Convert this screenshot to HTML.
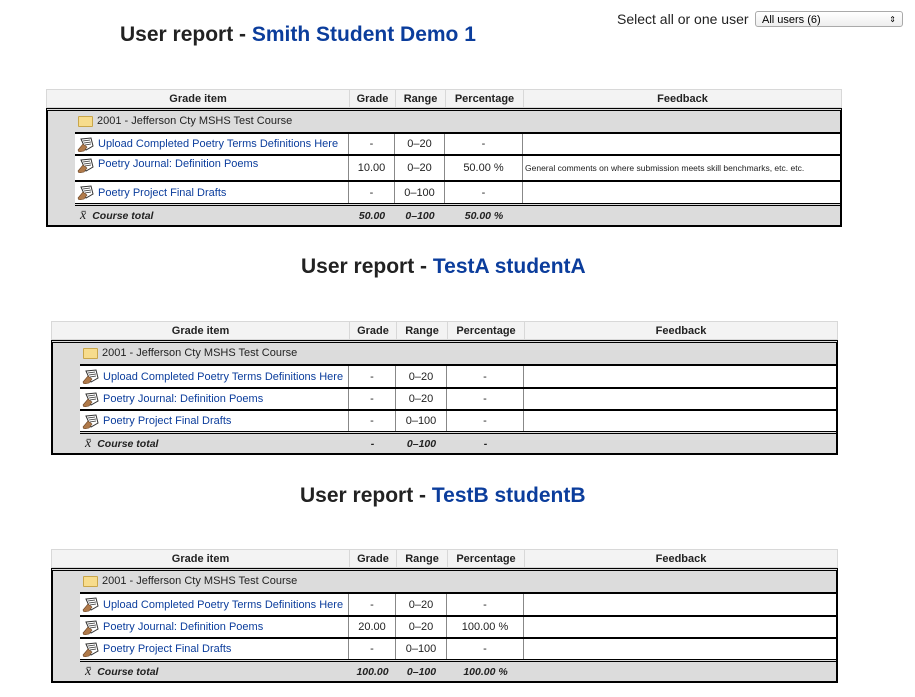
<!DOCTYPE html>
<html><head><meta charset="utf-8"><style>
body{margin:0;width:915px;height:697px;background:#fff;font-family:"Liberation Sans",Arial,sans-serif;position:relative;overflow:hidden}
.title{position:absolute;font-size:21px;font-weight:bold;color:#222;white-space:nowrap}
.title span{color:#0b3d9c}
.tbl{position:absolute}
.hdr{display:flex;height:19px;background:#f3f3f3;border:1px solid #d8d8d8;box-sizing:border-box;font-size:11px;font-weight:bold;color:#222}
.hdr div{border-right:1px solid #d8d8d8;text-align:center;line-height:18px;box-sizing:border-box}
.frame{border:2px solid #000;border-top:3px double #000;background:#dcdcdc;box-sizing:border-box}
.cat{height:21px;font-size:11px;line-height:21px;color:#222;display:flex;align-items:center}
.fold{width:15px;height:11px;background:#f7dc8c;border:1px solid #c9a64a;border-radius:1px;margin-right:4px;box-sizing:border-box}
.row{display:flex;background:#fff;border-top:2px solid #000;font-size:11px;color:#222;box-sizing:border-box}
.row div{box-sizing:border-box;border-right:1px solid #888;display:flex;align-items:center;justify-content:center}
.row div:last-child{border-right:none;justify-content:flex-start;font-size:8.5px;padding-left:2px}
.row .gi{justify-content:flex-start;color:#0b3d9c;padding-left:2px}
.ic{width:17px;height:15px;margin-right:4px;display:inline-block;flex:none}
.tot{display:flex;border-top:3px double #000;font-size:10.5px;font-weight:bold;font-style:italic;color:#222;height:22px;align-items:center;box-sizing:border-box}
.tot div{text-align:center}
.xb{font-family:'Liberation Serif',serif;font-weight:normal;font-size:14px;margin-right:6px}
.sel{position:absolute;left:617px;top:11px;font-size:14px;color:#222}
.box{position:absolute;left:755px;top:11px;width:148px;height:16px;border:1px solid #aaa;border-radius:3px;font-size:11px;line-height:16px;padding-left:6px;box-sizing:border-box;background:linear-gradient(#fff,#eee)}
</style></head><body>
<svg width="0" height="0" style="position:absolute"><defs><g id="ico"><path d="M4 2 L14 1 L16 9 L9 13Z" fill="#fff" stroke="#333" stroke-width="1"/><path d="M6 4 L13 3 M7 6 L14 5 M8 8 L14 7" stroke="#333" stroke-width="0.8"/><path d="M1 13 L6 7 L10 10 L7 14 L2 15Z" fill="#b07a4a" stroke="#6b4526" stroke-width="0.6"/></g></defs></svg>
<div class="sel">Select all or one user</div>
<div class="box">All users (6)<span style="position:absolute;right:6px;font-size:8px">&#8661;</span></div>

<div class="title" style="left:120px;top:23px">User report - <span>Smith Student Demo 1</span></div>
<div class="tbl" style="left:46px;top:89px;width:796px">
<div class="hdr"><div style="width:303px">Grade item</div><div style="width:46px">Grade</div><div style="width:50px">Range</div><div style="width:78px">Percentage</div><div style="flex:1;border:none">Feedback</div></div>
<div class="frame">
<div class="cat" style="padding-left:30px"><div class="fold"></div>2001 - Jefferson Cty MSHS Test Course</div>
<div style="margin-left:27px">
<div class="row" style="height:22px"><div class="gi" style="width:274px"><svg class="ic"><use href="#ico"/></svg>Upload Completed Poetry Terms Definitions Here</div><div style="width:46px">-</div><div style="width:50px">0–20</div><div style="width:78px">-</div><div style="flex:1"></div></div>
<div class="row" style="height:26px"><div class="gi" style="width:274px;align-items:flex-start;padding-top:2px"><svg class="ic"><use href="#ico"/></svg>Poetry Journal: Definition Poems</div><div style="width:46px">10.00</div><div style="width:50px">0–20</div><div style="width:78px">50.00 %</div><div style="flex:1">General comments on where submission meets skill benchmarks, etc. etc.</div></div>
<div class="row" style="height:23px"><div class="gi" style="width:274px"><svg class="ic"><use href="#ico"/></svg>Poetry Project Final Drafts</div><div style="width:46px">-</div><div style="width:50px">0–100</div><div style="width:78px">-</div><div style="flex:1"></div></div>
</div>
<div class="tot" style="margin-left:27px"><div style="width:274px;text-align:left;padding-left:5px;box-sizing:border-box"><span class="xb">x̄</span>Course total</div><div style="width:46px">50.00</div><div style="width:50px">0–100</div><div style="width:78px">50.00 %</div></div>
</div></div>

<div class="title" style="left:301px;top:255px">User report - <span>TestA studentA</span></div>
<div class="tbl" style="left:51px;top:321px;width:787px">
<div class="hdr"><div style="width:298px">Grade item</div><div style="width:47px">Grade</div><div style="width:51px">Range</div><div style="width:77px">Percentage</div><div style="flex:1;border:none">Feedback</div></div>
<div class="frame">
<div class="cat" style="padding-left:30px"><div class="fold"></div>2001 - Jefferson Cty MSHS Test Course</div>
<div style="margin-left:27px">
<div class="row" style="height:23px"><div class="gi" style="width:269px"><svg class="ic"><use href="#ico"/></svg>Upload Completed Poetry Terms Definitions Here</div><div style="width:47px">-</div><div style="width:51px">0–20</div><div style="width:77px">-</div><div style="flex:1"></div></div>
<div class="row" style="height:22px"><div class="gi" style="width:269px"><svg class="ic"><use href="#ico"/></svg>Poetry Journal: Definition Poems</div><div style="width:47px">-</div><div style="width:51px">0–20</div><div style="width:77px">-</div><div style="flex:1"></div></div>
<div class="row" style="height:22px"><div class="gi" style="width:269px"><svg class="ic"><use href="#ico"/></svg>Poetry Project Final Drafts</div><div style="width:47px">-</div><div style="width:51px">0–100</div><div style="width:77px">-</div><div style="flex:1"></div></div>
</div>
<div class="tot" style="margin-left:27px"><div style="width:269px;text-align:left;padding-left:5px;box-sizing:border-box"><span class="xb">x̄</span>Course total</div><div style="width:47px">-</div><div style="width:51px">0–100</div><div style="width:77px">-</div></div>
</div></div>

<div class="title" style="left:300px;top:484px">User report - <span>TestB studentB</span></div>
<div class="tbl" style="left:51px;top:549px;width:787px">
<div class="hdr"><div style="width:298px">Grade item</div><div style="width:47px">Grade</div><div style="width:51px">Range</div><div style="width:77px">Percentage</div><div style="flex:1;border:none">Feedback</div></div>
<div class="frame">
<div class="cat" style="padding-left:30px"><div class="fold"></div>2001 - Jefferson Cty MSHS Test Course</div>
<div style="margin-left:27px">
<div class="row" style="height:23px"><div class="gi" style="width:269px"><svg class="ic"><use href="#ico"/></svg>Upload Completed Poetry Terms Definitions Here</div><div style="width:47px">-</div><div style="width:51px">0–20</div><div style="width:77px">-</div><div style="flex:1"></div></div>
<div class="row" style="height:22px"><div class="gi" style="width:269px"><svg class="ic"><use href="#ico"/></svg>Poetry Journal: Definition Poems</div><div style="width:47px">20.00</div><div style="width:51px">0–20</div><div style="width:77px">100.00 %</div><div style="flex:1"></div></div>
<div class="row" style="height:22px"><div class="gi" style="width:269px"><svg class="ic"><use href="#ico"/></svg>Poetry Project Final Drafts</div><div style="width:47px">-</div><div style="width:51px">0–100</div><div style="width:77px">-</div><div style="flex:1"></div></div>
</div>
<div class="tot" style="margin-left:27px"><div style="width:269px;text-align:left;padding-left:5px;box-sizing:border-box"><span class="xb">x̄</span>Course total</div><div style="width:47px">100.00</div><div style="width:51px">0–100</div><div style="width:77px">100.00 %</div></div>
</div></div>
</body></html>
